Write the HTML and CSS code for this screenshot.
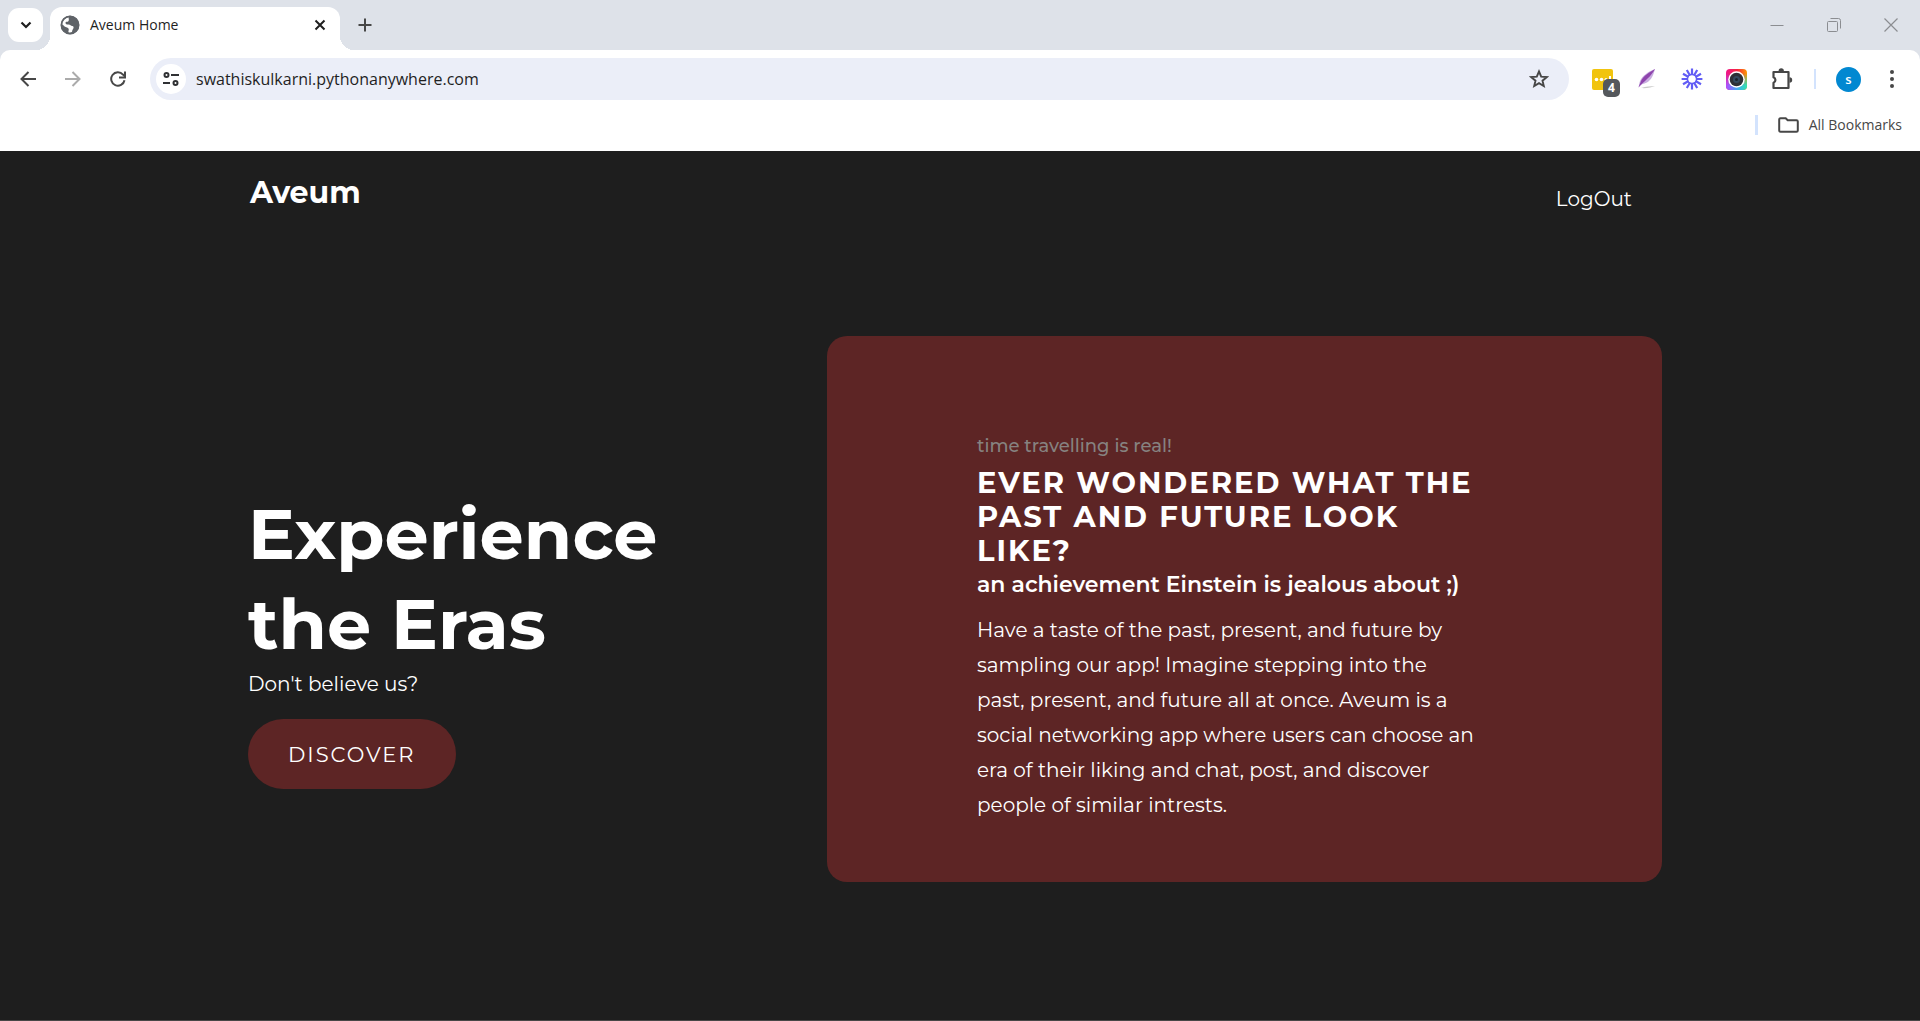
FILE: index.html
```html
<!DOCTYPE html>
<html lang="en">
<head>
<meta charset="utf-8">
<meta name="viewport" content="width=device-width, initial-scale=1">
<title>Aveum Home</title>
<link rel="stylesheet" href="styles.css">
</head>
<body>
<header class="browser">
  <div class="tab-strip">
    <button class="tab-search" aria-label="Search tabs">
      <svg width="12" height="12" viewBox="0 0 12 12"><path d="M1.500 3.500 6 8l4.500-4.500" fill="none" stroke="#1f1f1f" stroke-width="2.200"/></svg>
    </button>
    <div class="tab">
      <svg width="20" height="20" viewBox="0 0 20 20"><circle cx="10" cy="10" r="9.200" fill="#5f6368"/><path d="M9 2.200C8 3.500 9.500 4.500 8.500 6S5.800 6 5.500 7.800c-.2 1.400 1.200 1.700 3 1.700 2 0 2.200 1.200 3.700 1.500 1.500.3 1.800 1.400 1 2.700-.8 1.200-1 1.500-1.200 3.300-1 .6-2.600.8-3.500.5C8 16 9.300 15 8.500 13.500 7.800 12 5 12.500 4 11c-.7-1-1.500-1.500-2-1.500C2 5.500 5 2.500 9 2.200Z" fill="#fff"/><circle cx="10" cy="10" r="8.600" fill="none" stroke="#5f6368" stroke-width="1.800"/></svg>
      <span class="tab-title">Aveum Home</span>
      <button class="icon-btn tab-close" aria-label="Close tab">
        <svg width="12" height="12" viewBox="0 0 12 12"><path d="m1.500 1.500 9 9m0-9-9 9" stroke="#1f1f1f" stroke-width="2"/></svg>
      </button>
    </div>
    <button class="icon-btn new-tab" aria-label="New tab">
      <svg width="14" height="14" viewBox="0 0 14 14"><path d="M7 .5v13M.5 7h13" stroke="#474747" stroke-width="2"/></svg>
    </button>
    <div class="window-controls">
      <button class="icon-btn" aria-label="Minimize"><svg width="14" height="14" viewBox="0 0 14 14"><path d="M.5 7.500h13" stroke="#8b8d91"/></svg></button>
      <button class="icon-btn" aria-label="Restore"><svg width="14" height="14" viewBox="0 0 14 14"><path d="M3.500.5h8a2 2 0 0 1 2 2v8M2 3.500h7.500a1 1 0 0 1 1 1v8a1 1 0 0 1-1 1h-8a1 1 0 0 1-1-1v-8a1 1 0 0 1 1-1Z" fill="none" stroke="#8b8d91"/></svg></button>
      <button class="icon-btn" aria-label="Close"><svg width="14" height="14" viewBox="0 0 14 14"><path d="m.5.5 13 13m0-13-13 13" stroke="#8b8d91" stroke-width="1.200"/></svg></button>
    </div>
  </div>
  <div class="toolbar">
    <button class="icon-btn tool" aria-label="Back"><svg width="16" height="16" viewBox="0 0 16 16"><path d="M8.500 1 1.500 8l7 7M1.500 8H16" fill="none" stroke="#474747" stroke-width="2"/></svg></button>
    <button class="icon-btn tool" aria-label="Forward"><svg width="16" height="16" viewBox="0 0 16 16"><path d="m7.500 1 7 7-7 7M14.500 8H0" fill="none" stroke="#ababab" stroke-width="2"/></svg></button>
    <button class="icon-btn tool" aria-label="Reload"><svg width="16" height="16" viewBox="0 0 16 16"><path d="M14.500 9.200A6.700 6.700 0 1 1 13 3.600L14.500 5" fill="none" stroke="#474747" stroke-width="2"/><path d="M15 .5v6H9" fill="none" stroke="#474747" stroke-width="2"/></svg></button>
    <form class="omnibox">
      <button type="button" class="icon-btn site-info" aria-label="Site information"><svg width="16" height="14" viewBox="0 0 16 14"><g fill="none" stroke="#303134" stroke-width="2"><circle cx="3.500" cy="3" r="2"/><path d="M8 3h8M0 11h7"/><circle cx="12.500" cy="11" r="2"/></g></svg></button>
      <input class="address" type="text" aria-label="Address" value="swathiskulkarni.pythonanywhere.com">
      <button type="button" class="icon-btn star" aria-label="Bookmark this page"><svg width="20" height="20" viewBox="0 0 20 20"><path d="m10 2.500 2.200 5.100 5.500.5-4.200 3.600 1.300 5.400L10 14.200l-4.800 2.900 1.300-5.400-4.200-3.600 5.500-.5Z" fill="none" stroke="#474747" stroke-width="1.900"/></svg></button>
    </form>
    <div class="extensions">
      <button class="icon-btn tool" aria-label="Keep, 4 items"><svg width="30" height="30" viewBox="0 0 30 30"><rect x="5" y="5" width="21" height="21" rx="2" fill="#f1c40f"/><g fill="#fff"><circle cx="9.500" cy="15.500" r="1.800"/><circle cx="14.500" cy="15.500" r="1.800"/><circle cx="19" cy="15.500" r="1.500"/><path d="M22 12h2v4h-2z"/></g></svg><span class="badge">4</span></button>
      <button class="icon-btn tool" aria-label="Feather"><svg width="20" height="22" viewBox="0 0 20 22"><path d="M4 20c5 .5 11-.5 14-2-4 .2-9 .3-14 2Z" fill="#c9c9c9"/><path d="M18 1C12 3 5 8 3 13c-.7 2-.8 4-1.500 6.500C3 17 5 16 7.500 15.500 13 14 16 9 18 1Z" fill="#c9aee0"/><path d="M18 1C13 4 6 8 4 13c-.6 1.800-1.600 4-2.500 6.500C7 13 14 9 18 1Z" fill="#8e44ad"/></svg></button>
      <button class="icon-btn tool" aria-label="Loom"><svg width="22" height="22" viewBox="-11 -11 22 22"><g stroke="#625df5" stroke-width="2.200"><path d="M0-4v-6.400M0 4v6.400M-4 0h-6.400M4 0h6.400M2-3.460l3.200-5.540M-2-3.460l-3.200-5.540M2 3.460l3.200 5.540M-2 3.460l-3.200 5.540M3.460-2l5.540-3.200M3.460 2l5.540 3.200M-3.460-2l-5.540-3.200M-3.460 2l-5.540 3.200"/><circle r="4.600" fill="none" stroke-width="1.600"/></g></svg></button>
      <button class="icon-btn tool" aria-label="Screen capture"><svg width="21" height="21" viewBox="0 0 21 21"><defs><linearGradient id="capTop"><stop offset="0" stop-color="#f0148c"/><stop offset=".55" stop-color="#f5283c"/><stop offset="1" stop-color="#ff9a00"/></linearGradient><linearGradient id="capBottom"><stop offset="0" stop-color="#b44bff"/><stop offset=".5" stop-color="#4aa5f5"/><stop offset="1" stop-color="#2ee6b0"/></linearGradient><linearGradient id="capFade" x2="0" y2="1"><stop offset=".2" stop-color="#fff" stop-opacity="0"/><stop offset=".8" stop-color="#fff"/></linearGradient><mask id="capMask"><rect width="21" height="21" fill="url(#capFade)"/></mask></defs><rect width="21" height="21" rx="4" fill="url(#capTop)"/><rect width="21" height="21" rx="4" fill="url(#capBottom)" mask="url(#capMask)"/><circle cx="10.500" cy="10.500" r="8.300" fill="#fff"/><circle cx="10.500" cy="10.500" r="6.800" fill="#2d2f36"/><circle cx="10.500" cy="10.500" r="3.500" fill="#33485c"/><circle cx="10.500" cy="10.500" r="1.500" fill="#1c232c"/></svg></button>
      <button class="icon-btn tool" aria-label="Extensions"><svg width="24" height="24" viewBox="0 0 24 24"><path d="M3.500 5h15v16h-15v-5.200a3 3 0 0 0 0-5.600Z" fill="none" stroke="#474747" stroke-width="2.200" stroke-linejoin="round"/><path d="M8.500 4a2.700 2.700 0 0 1 5.400 0ZM19.500 10.300a2.700 2.700 0 0 1 0 5.400Z" fill="#474747"/></svg></button>
    </div>
    <span class="divider"></span>
    <button class="avatar" aria-label="Profile">s</button>
    <button class="icon-btn menu" aria-label="Menu"><svg width="4" height="18" viewBox="0 0 4 18" fill="#474747"><circle cx="2" cy="2" r="2"/><circle cx="2" cy="9" r="2"/><circle cx="2" cy="16" r="2"/></svg></button>
  </div>
  <div class="bookmarks">
    <span class="divider"></span>
    <button class="all-bookmarks"><svg width="21" height="16" viewBox="0 0 21 16"><path d="M1.200 13.500v-11Q1.200 1.200 2.500 1.200h5.200l2 2h8.800q1.300 0 1.300 1.300v9q0 1.300-1.300 1.300h-16q-1.300 0-1.300-1.300Z" fill="none" stroke="#474747" stroke-width="2"/></svg>All Bookmarks</button>
  </div>
</header>
<main class="page">
  <nav class="nav">
    <a class="brand" href="#">Aveum</a>
    <a class="logout" href="#">LogOut</a>
  </nav>
  <section class="hero">
    <div class="intro">
      <h1 class="title">Experience<br>the Eras</h1>
      <p class="tease">Don't believe us?</p>
      <button class="discover">DISCOVER</button>
    </div>
    <article class="card">
      <p class="eyebrow">time travelling is real!</p>
      <h2 class="card-title">EVER WONDERED WHAT THE<br>PAST AND FUTURE LOOK<br>LIKE?</h2>
      <h3 class="card-subtitle">an achievement Einstein is jealous about ;)</h3>
      <p class="card-text">Have a taste of the past, present, and future by<br>sampling our app! Imagine stepping into the<br>past, present, and future all at once. Aveum is a<br>social networking app where users can choose an<br>era of their liking and chat, post, and discover<br>people of similar intrests.</p>
    </article>
  </section>
</main>
</body>
</html>
```
FILE: styles.css
```css
* { box-sizing: border-box; }

body {
  margin: 0;
  min-height: 100vh;
  display: flex;
  flex-direction: column;
  border-bottom: 1px solid #474747;
  background: #1e1e1e;
  color: #fff;
  font-family: Montserrat, Inter, sans-serif;
}

h1, h2, h3, p { margin: 0; }
a { color: inherit; text-decoration: none; }
svg { display: block; flex: none; }

button, input {
  margin: 0;
  padding: 0;
  border: 0;
  background: none;
  color: inherit;
  font: inherit;
}

.icon-btn {
  display: flex;
  align-items: center;
  justify-content: center;
}

/* Browser frame */
.browser {
  padding-bottom: 10px;
  background: #fff;
  color: #1f1f1f;
  font-family: "Segoe UI", "Open Sans", sans-serif;
}

.tab-strip {
  display: flex;
  height: 62px;
  padding: 7px 1px 12px 8px;
  background: #dee2e9;
}

.tab-search {
  display: flex;
  align-items: center;
  justify-content: center;
  width: 35px;
  height: 34px;
  margin: 1px 7px 0 0;
  border-radius: 11px;
  background: #fff;
}

.tab {
  position: relative;
  display: flex;
  align-items: center;
  gap: 10px;
  width: 290px;
  height: 43px;
  padding: 0 14px 7px 10px;
  border-radius: 12px 12px 0 0;
  background: #fff;
}

.tab::before,
.tab::after {
  content: "";
  position: absolute;
  bottom: 0;
  width: 14px;
  height: 14px;
}

.tab::before {
  right: 100%;
  background: radial-gradient(circle at 0 0, transparent 14px, #fff 14px);
}

.tab::after {
  left: 100%;
  background: radial-gradient(circle at 100% 0, transparent 14px, #fff 14px);
}

.tab-title { flex: 1; font-size: 14px; line-height: 20px; }
.new-tab { width: 50px; height: 36px; }
.window-controls { display: flex; margin-left: auto; }
.window-controls .icon-btn { width: 57px; height: 36px; }

.toolbar {
  display: flex;
  align-items: center;
  height: 58px;
  margin-top: -12px;
  padding: 0 17px 0 5px;
  border-radius: 10px 10px 0 0;
  background: #fff;
}

.tool { position: relative; width: 45px; height: 42px; }

.omnibox {
  display: flex;
  flex: 1;
  align-items: center;
  height: 42px;
  margin: 0 10px;
  padding: 0 20px 0 6px;
  border-radius: 21px;
  background: #ebeef8;
}

.site-info { width: 30px; height: 30px; border-radius: 50%; background: #fff; }

.address {
  flex: 1;
  min-width: 0;
  margin-left: 10px;
  outline: 0;
  font-size: 16px;
  line-height: 24px;
}

.extensions { display: flex; margin-right: 10px; }

.badge {
  position: absolute;
  right: 4px;
  bottom: 3px;
  width: 17px;
  height: 18px;
  border-radius: 5px;
  background: #55585c;
  color: #fff;
  font-size: 12px;
  font-weight: 700;
  line-height: 18px;
}

.divider { width: 2px; height: 20px; background: #d3e3fd; }

.avatar {
  width: 25px;
  height: 25px;
  margin: 0 20px;
  border-radius: 50%;
  background: #0288d1;
  color: #fff;
  font-size: 13px;
  font-weight: 600;
  line-height: 22px;
}

.menu { width: 22px; height: 42px; }

.bookmarks {
  display: flex;
  align-items: center;
  justify-content: flex-end;
  gap: 20px;
  height: 33px;
  padding-right: 18px;
}

.bookmarks .divider { width: 3px; }

.all-bookmarks {
  display: flex;
  align-items: center;
  gap: 10px;
  color: #474747;
  font-size: 14px;
  line-height: 20px;
}

/* Landing page */
.page {
  width: 100%;
  max-width: 1424px;
  margin: 0 auto;
}

.nav {
  display: flex;
  justify-content: space-between;
  padding: 22px 40px 0 2px;
}

.brand { font-size: 30px; font-weight: 700; line-height: 40px; }
.logout { padding-top: 12px; font-size: 20px; line-height: 28px; }

.hero {
  display: grid;
  grid-template-columns: 579fr 835fr;
  align-items: start;
  padding: 123px 10px 0 0;
}

.intro { padding-top: 153px; }
.title { font-size: 70px; font-weight: 700; line-height: 90px; }
.tease { font-size: 20px; line-height: 30px; }

.discover {
  height: 70px;
  margin-top: 20px;
  padding: 0 40px;
  border-radius: 35px;
  background: #5d2525;
  font-size: 21px;
  letter-spacing: 2px;
}

.card {
  padding: 96px 150px 59px;
  border-radius: 20px;
  background: #5d2525;
  white-space: nowrap;
}

.eyebrow { color: #868280; font-size: 18px; font-weight: 500; line-height: 28px; }
.card-title { margin-top: 6px; font-size: 29px; line-height: 34px; letter-spacing: 2px; }
.card-subtitle { font-size: 22px; font-weight: 600; line-height: 34px; }
.card-text { margin-top: 11px; font-size: 20px; line-height: 35px; }
```
